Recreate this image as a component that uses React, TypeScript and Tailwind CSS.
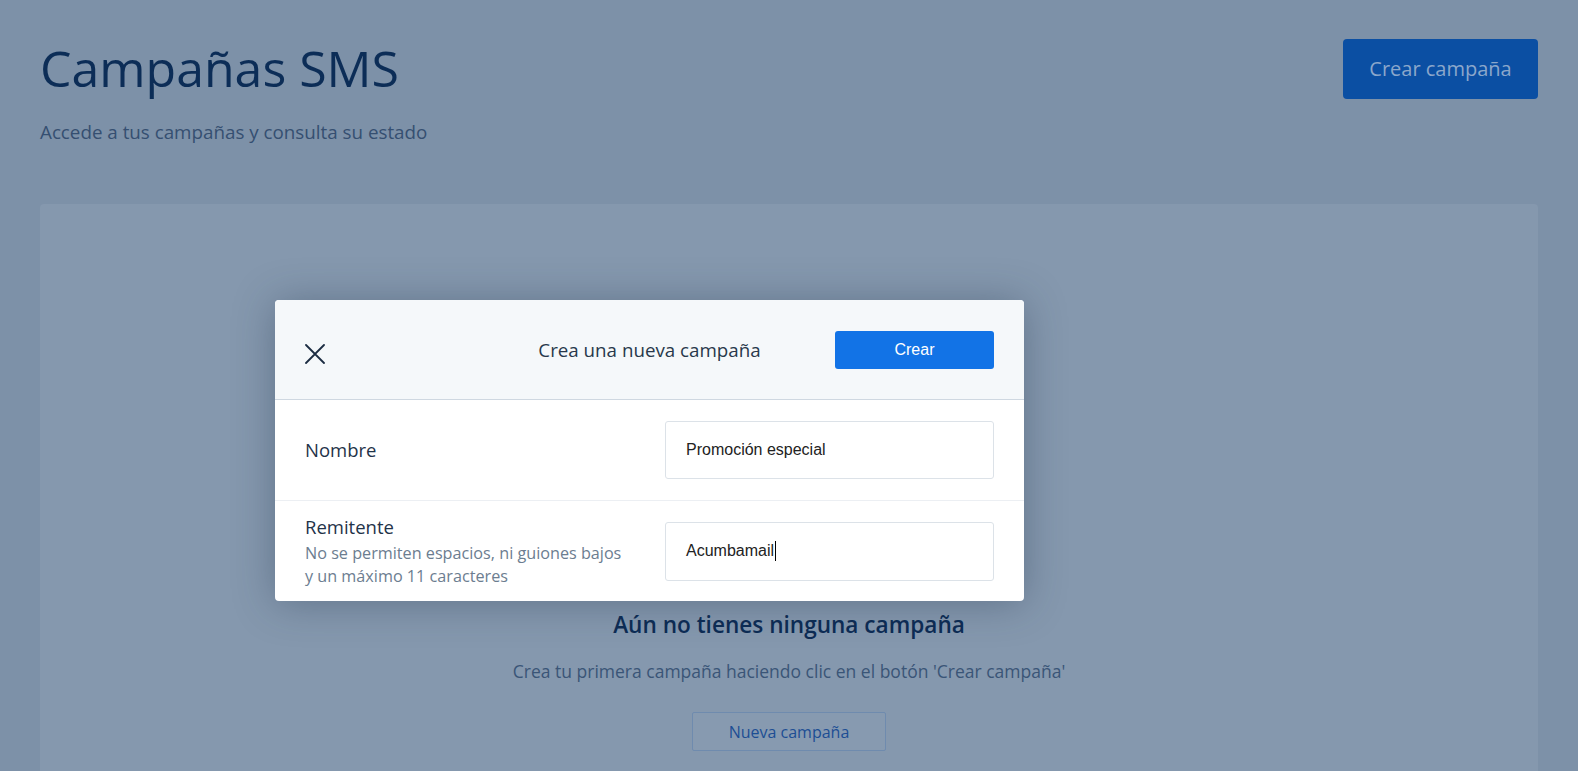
import React from "react";

export default function App() {
  return (
    <div
      className="relative h-[771px] w-full overflow-hidden bg-[#7d91a8]"
      style={{ fontFamily: '"Open Sans", "Noto Sans", sans-serif' }}
    >
      {/* Header */}
      <div className="flex items-start justify-between px-[40px] pt-[38px]">
        <div>
          <h1 className="text-[50px] leading-[61px] font-normal text-[#0c2d57]">
            Campañas SMS
          </h1>
          <p className="mt-[20px] text-[18.8px] leading-[26px] text-[#354f71]">
            Accede a tus campañas y consulta su estado
          </p>
        </div>
        <button className="mt-[1px] h-[60px] w-[195px] rounded-[4px] bg-[#0b4fa3] text-[20px] text-[#8ba7cb]">
          Crear campaña
        </button>
      </div>

      {/* Card */}
      <div className="mx-[40px] mt-[59px] h-[600px] rounded-[4px] bg-[#8598ae] pt-[406px] flex flex-col items-center">
        <h2 className="text-[22.6px] leading-[30px] font-semibold text-[#0d2c55]">
          Aún no tienes ninguna campaña
        </h2>
        <p className="mt-[19px] text-[17.5px] leading-[24px] text-[#3a5577]">
          Crea tu primera campaña haciendo clic en el botón 'Crear campaña'
        </p>
        <button className="mt-[29px] h-[39px] w-[194px] rounded-[2px] border border-[#6f8bae] bg-[#879ab0] text-[16px] text-[#1d4e94]">
          Nueva campaña
        </button>
      </div>

      {/* Modal */}
      <div className="absolute left-[275px] top-[300px] w-[749px] overflow-hidden rounded-[4px] bg-white shadow-[0_2px_40px_rgba(30,45,70,0.35)]">
        <div className="grid h-[100px] grid-cols-[1fr_auto_1fr] items-center border-b border-[#cfd8e1] bg-[#f5f8fa] px-[30px]">
          <div className="flex items-center pt-[8px]">
            <svg width="20" height="20" viewBox="0 0 20 20">
              <path
                d="M1 1 L19 19 M19 1 L1 19"
                stroke="#1b2c42"
                strokeWidth="1.8"
                strokeLinecap="round"
                fill="none"
              />
            </svg>
          </div>
          <div className="text-[18.75px] leading-[26px] text-[#28384b]">
            Crea una nueva campaña
          </div>
          <div className="flex justify-end">
            <button
              className="h-[38px] w-[159px] rounded-[3px] bg-[#1273e6] text-[16px] text-white"
              style={{ fontFamily: '"Liberation Sans", Arial, sans-serif' }}
            >
              Crear
            </button>
          </div>
        </div>

        <div className="flex h-[101px] items-center justify-between border-b border-[#eceff3] px-[30px]">
          <div className="text-[18.5px] leading-[24px] text-[#1f3349]">Nombre</div>
          <div
            className="flex h-[58px] w-[329px] items-center rounded-[3px] border border-[#dce2e8] px-[20px] text-[16px] text-[#222]"
            style={{ fontFamily: '"Liberation Sans", Arial, sans-serif' }}
          >
            Promoción especial
          </div>
        </div>

        <div className="flex h-[100px] items-center justify-between px-[30px]">
          <div>
            <div className="text-[18.5px] leading-[24px] text-[#1f3349]">Remitente</div>
            <div className="mt-[3px] text-[16.2px] leading-[23px] text-[#6c7d90]">
              No se permiten espacios, ni guiones bajos
              <br />y un máximo 11 caracteres
            </div>
          </div>
          <div
            className="flex h-[59px] w-[329px] items-center rounded-[3px] border border-[#dce2e8] px-[20px] text-[16px] text-[#222]"
            style={{ fontFamily: '"Liberation Sans", Arial, sans-serif' }}
          >
            Acumbamail
            <span className="ml-[1px] inline-block h-[20px] w-[1px] bg-black" />
          </div>
        </div>
      </div>
    </div>
  );
}
